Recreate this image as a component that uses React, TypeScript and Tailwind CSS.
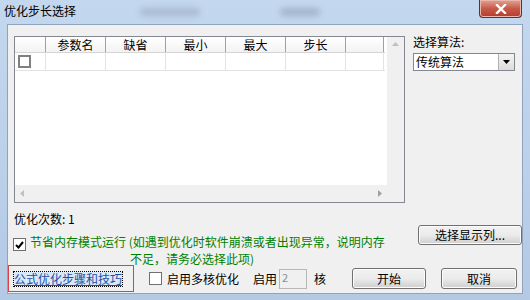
import React from "react";

const F = { fontFamily: '"Noto Sans CJK SC", "Noto Sans", sans-serif' };

function Btn({ children, w, h = 20 }: { children: React.ReactNode; w: number; h?: number }) {
  return (
    <div
      className="flex items-center justify-center text-[12px] text-black border border-[#707070] rounded-[3px] bg-gradient-to-b from-[#f2f2f2] via-[#ebebeb] to-[#cfcfcf] shadow-[inset_0_0_0_1px_#fcfcfc]"
      style={{ width: w, height: h }}
    >
      {children}
    </div>
  );
}

export default function App() {
  const cols = [
    { w: 31, t: "" },
    { w: 60, t: "参数名" },
    { w: 60, t: "缺省" },
    { w: 60, t: "最小" },
    { w: 60, t: "最大" },
    { w: 60, t: "步长" },
    { w: 38, t: "" },
  ];
  return (
    <div className="w-[530px] h-[300px] overflow-hidden relative bg-gradient-to-b from-[#c3d7ee] via-[#bcd1ea] to-[#b3c9e4]" style={F}>
      <div className="absolute left-[140px] top-[8px] w-[60px] h-[8px] rounded-full bg-[#7f8fa8] opacity-40 blur-[3px]" />
      <div className="absolute left-[280px] top-[8px] w-[40px] h-[8px] rounded-full bg-[#6f7f98] opacity-40 blur-[3px]" />
      <div className="h-[24px] flex items-start">
        <div className="pl-[4px] pt-[2px] text-[12px] text-black">优化步长选择</div>
        <div className="flex-1" />
        <div className="mr-[8px] w-[43px] h-[18px] rounded-b-[4px] border border-[#6a2b2b] border-t-0 bg-gradient-to-b from-[#e0a395] via-[#c75a4a] to-[#b53a2a] flex items-center justify-center shadow-[inset_0_0_0_1px_#e9b7ad]">
          <svg width="12" height="10" viewBox="0 0 12 10">
            <path d="M2 1 L10 9 M10 1 L2 9" stroke="#ffffff" strokeWidth="2.4" strokeLinecap="square" />
          </svg>
        </div>
      </div>
      <div className="mx-[7px] h-[270px] border border-[#8fa3bd] bg-[#f0f0f0] relative">
        <div className="flex pt-[11px] pl-[6px]">
          <div className="w-[391px] h-[167px] border border-[#828790] bg-white flex flex-col">
            <div className="flex flex-1 min-h-0">
              <div className="w-[370px] flex flex-col">
                <div className="flex h-[16px] border-b border-[#d5d5d5]">
                  {cols.map((c, i) => (
                    <div
                      key={i}
                      className="h-full flex items-center justify-center text-[12px] text-black bg-gradient-to-b from-[#ffffff] to-[#f3f3f3] border-r border-[#a0a0a0] leading-none"
                      style={{ width: c.w }}
                    >
                      {c.t}
                    </div>
                  ))}
                </div>
                <div className="flex h-[18px] border-b border-[#e3e3e3]">
                  {cols.map((c, i) => (
                    <div key={i} className="h-full border-r border-[#e3e3e3] flex items-center pl-[3px]" style={{ width: c.w }}>
                      {i === 0 && <div className="w-[13px] h-[13px] border-2 border-[#808080] bg-white" />}
                    </div>
                  ))}
                </div>
              </div>
              <div className="flex-1" />
              <div className="w-[17px] bg-[#f0f0f0] flex flex-col items-center pt-[5px]">
                <svg width="7" height="4" viewBox="0 0 7 4">
                  <path d="M0 4 L3.5 0 L7 4 Z" fill="#c0c0c0" />
                </svg>
              </div>
            </div>
            <div className="h-[17px] flex">
              <div className="flex-1 bg-[#f0f0f0] flex items-center justify-between px-[5px]">
                <svg width="4" height="7" viewBox="0 0 4 7">
                  <path d="M4 0 L0 3.5 L4 7 Z" fill="#c0c0c0" />
                </svg>
                <svg width="4" height="7" viewBox="0 0 4 7">
                  <path d="M0 0 L4 3.5 L0 7 Z" fill="#a0a0a0" />
                </svg>
              </div>
              <div className="w-[17px] bg-[#f0f0f0]" />
            </div>
          </div>
          <div className="ml-[8px] flex flex-col">
            <div className="text-[12px] text-black leading-none">选择算法:</div>
            <div className="mt-[5px] w-[102px] h-[18px] border border-[#828790] bg-white flex items-center">
              <div className="flex-1 text-[12px] text-black pl-[2px] leading-none">传统算法</div>
              <div className="w-[16px] h-[16px] bg-gradient-to-b from-[#f4f4f4] to-[#dcdcdc] border-l border-[#b0b0b0] flex items-center justify-center">
                <svg width="7" height="4" viewBox="0 0 7 4">
                  <path d="M0 0 L7 0 L3.5 4 Z" fill="#000" />
                </svg>
              </div>
            </div>
          </div>
        </div>
        <div className="pl-[6px] pt-[10px] text-[12px] text-black leading-none">优化次数: 1</div>
        <div className="flex mt-[8px] pl-[5px]">
          <div className="pt-[5px]">
            <div className="w-[13px] h-[13px] border border-[#707070] bg-white flex items-center justify-center">
              <svg width="9" height="8" viewBox="0 0 9 8">
                <path d="M1 4 L3.5 6.5 L8 1" stroke="#000" strokeWidth="2" fill="none" />
              </svg>
            </div>
          </div>
          <div className="ml-[4px] text-[12px] text-[#008000] leading-[17px] w-[372px]">
            <div>节省内存模式运行 (如遇到优化时软件崩溃或者出现异常，说明内存</div>
            <div className="pl-[100px]">不足，请务必选择此项)</div>
          </div>
          <div className="ml-[27px] mt-[-8px]">
            <Btn w={104} h={20}>选择显示列...</Btn>
          </div>
        </div>
        <div className="absolute left-[0px] bottom-[1px] right-0 flex items-center">
          <div className="w-[126px] h-[27px] border border-[#e04040] flex items-center pl-[5px]">
            <span className="text-[12px] leading-none text-[#1c4fa8] bg-[#dbe8f7] underline outline-1 outline-dotted outline-black py-[1px]">公式优化步骤和技巧</span>
          </div>
          <div className="ml-[15px] w-[13px] h-[13px] border border-[#707070] bg-white" />
          <div className="ml-[5px] text-[12px] text-black">启用多核优化</div>
          <div className="ml-[14px] text-[12px] text-black">启用</div>
          <div className="ml-[2px] w-[28px] h-[20px] border border-[#b8b8b8] bg-[#f0f0f0] text-[11px] text-[#8c8c8c] pl-[2px] leading-[14px]">2</div>
          <div className="ml-[7px] text-[12px] text-black">核</div>
          <div className="ml-[26px]">
            <Btn w={74} h={21}>开始</Btn>
          </div>
          <div className="ml-[15px]">
            <Btn w={76} h={21}>取消</Btn>
          </div>
        </div>
      </div>
    </div>
  );
}
